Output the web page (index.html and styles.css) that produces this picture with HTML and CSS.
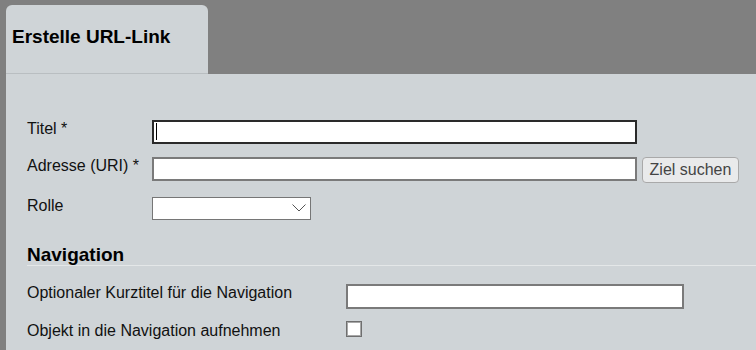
FILE: index.html
```html
<!DOCTYPE html>
<html lang="de">
<head>
<meta charset="utf-8">
<title>Erstelle URL-Link</title>
<link rel="stylesheet" href="styles.css">
</head>
<body>
<div class="page">
  <div class="tab"><h1 class="tab-title">Erstelle URL-Link</h1></div>
  <div class="panel">
    <div class="row row-1">
      <label class="label">Titel *</label>
      <div class="field-wrap">
        <input class="text-input focused" type="text">
        <span class="caret"></span>
      </div>
    </div>
    <div class="row row-2">
      <label class="label">Adresse (URI) *</label>
      <input class="text-input" type="text">
      <button class="btn" type="button">Ziel suchen</button>
    </div>
    <div class="row row-3">
      <label class="label">Rolle</label>
      <div class="select-wrap">
        <select class="select"><option></option></select>
        <svg class="chevron" width="14" height="8" viewBox="0 0 14 8"><polyline points="0.5,0.5 7,7 13.5,0.5" fill="none" stroke="#555" stroke-width="1"/></svg>
      </div>
    </div>
    <h2 class="section-title">Navigation</h2>
    <div class="row row-4">
      <label class="label label-wide">Optionaler Kurztitel für die Navigation</label>
      <input class="text-input short" type="text">
    </div>
    <div class="row row-5">
      <label class="label label-wide">Objekt in die Navigation aufnehmen</label>
      <span class="checkbox"></span>
    </div>
  </div>
</div>
</body>
</html>
```
FILE: styles.css
```css
html, body {
  margin: 0;
  padding: 0;
  background: #808080;
}
body {
  font-family: "Liberation Sans", Arial, sans-serif;
  font-size: 16px;
  color: #111;
}
.page {
  padding: 5px 0 0 6px;
}
.tab {
  width: 202px;
  height: 68px;
  background: #cfd4d7;
  border-radius: 6px 6px 0 0;
  border-bottom: 1px solid #b9bec1;
  box-sizing: content-box;
}
.tab-title {
  margin: 0;
  padding: 21px 0 0 6px;
  font-size: 19px;
  line-height: 22px;
  font-weight: bold;
  color: #000;
}
.panel {
  background: #cfd4d7;
  padding: 46px 0 13px 21px;
}
.row {
  display: flex;
  align-items: flex-start;
}
.row-1 { margin-bottom: 13px; }
.row-2 { margin-bottom: 14px; }
.row-4 { margin-top: 18px; margin-bottom: 12px; }
.label {
  width: 125px;
  flex: none;
  line-height: 18px;
  color: #111;
}
.label-wide { width: 319px; }
.row-5 .label { margin-top: 1px; }
.field-wrap {
  position: relative;
}
.text-input {
  display: block;
  width: 485px;
  height: 24px;
  box-sizing: border-box;
  margin: 0;
  padding: 0 3px;
  background: #fff;
  border: 2px solid #7a7a7a;
  border-radius: 0;
  font: inherit;
  outline: none;
}
.text-input.focused {
  border-color: #2a2a2a;
}
.text-input.short {
  width: 338px;
  height: 25px;
}
.caret {
  position: absolute;
  left: 4px;
  top: 3px;
  width: 1px;
  height: 17px;
  background: #000;
}
.btn {
  margin: 0 0 0 5px;
  width: 97px;
  height: 26px;
  box-sizing: border-box;
  padding: 0;
  background: #e9eaeb;
  border: 1px solid #a9a9a9;
  border-radius: 4px;
  font-family: "Liberation Sans", Arial, sans-serif;
  font-size: 16px;
  color: #444;
}
.select-wrap {
  position: relative;
  width: 159px;
  height: 23px;
}
.select {
  -webkit-appearance: none;
  appearance: none;
  display: block;
  width: 159px;
  height: 23px;
  box-sizing: border-box;
  margin: 0;
  background: #fff;
  border: 1px solid #767676;
  border-radius: 0;
  outline: none;
}
.chevron {
  position: absolute;
  left: 140px;
  top: 7px;
}
.section-title {
  margin: 24px 0 0 0;
  font-size: 19px;
  line-height: 21px;
  font-weight: bold;
  color: #000;
  border-bottom: 1px solid #e4e7e8;
}
.checkbox {
  display: block;
  width: 16px;
  height: 16px;
  box-sizing: border-box;
  background: #fff;
  border: 1px solid #6f6f6f;
  box-shadow: inset 0 0 0 1px #a8a8a8;
}
```
